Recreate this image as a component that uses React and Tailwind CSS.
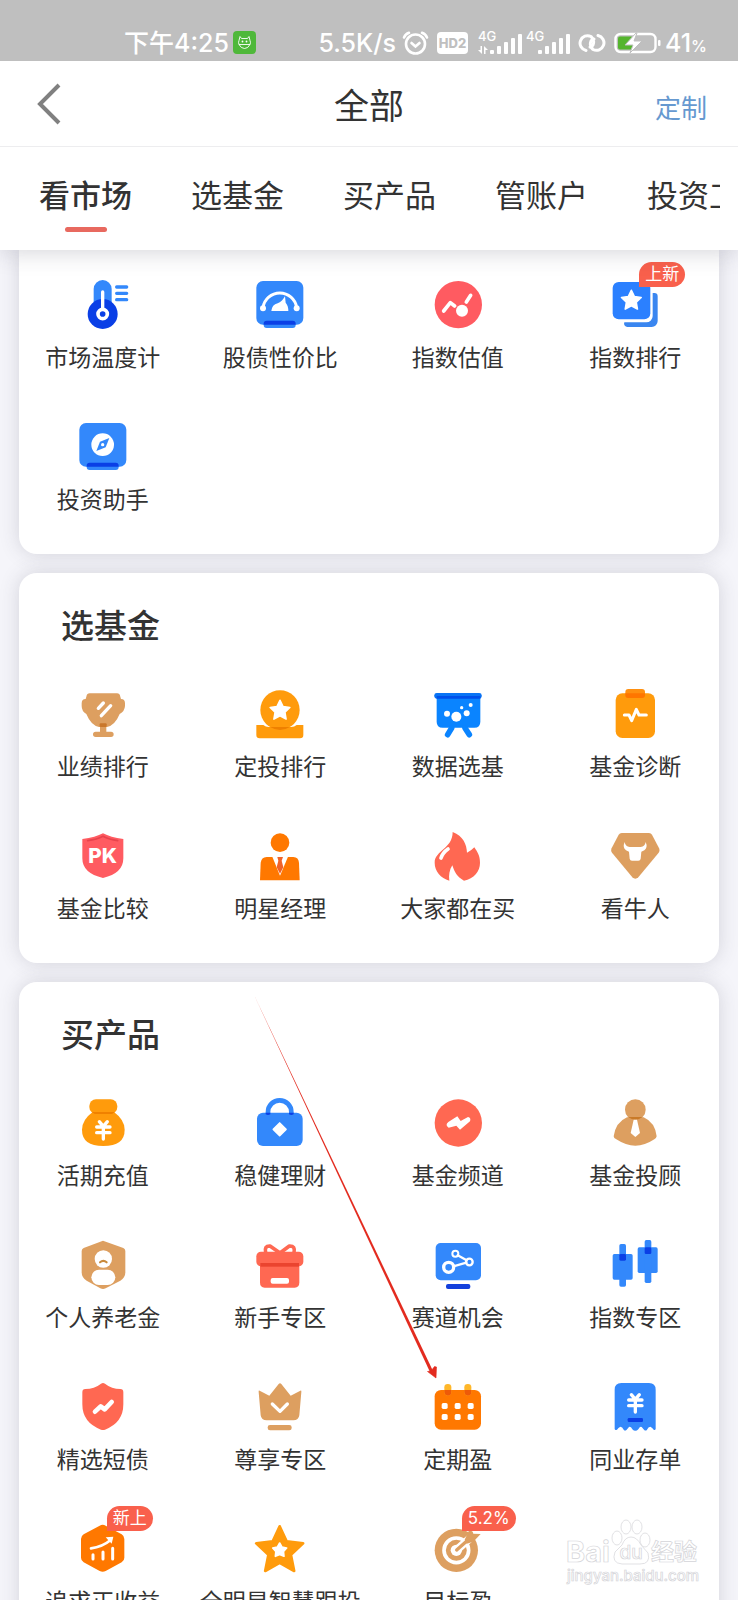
/**
 * All services page
 *
 * Status bar, page header with tabs, and cards that list the fund services.
 */

// ============================================================================
// Drawing helpers
// ============================================================================

const BLUE = '#3388fb';
const NAVY = '#0a3fe6';
const CORAL = '#ff6852';
const ROSE = '#ff5b61';
const AMBER = '#ff9b0c';
const ORANGE = '#ff7800';
const TAN = '#dd9f60';

const starPoints = (cx, cy, outer, inner) =>
  Array.from({ length: 10 }, (_, i) => {
    const r = i % 2 ? inner : outer;
    const a = (Math.PI / 5) * i - Math.PI / 2;
    return `${(cx + r * Math.cos(a)).toFixed(1)},${(cy + r * Math.sin(a)).toFixed(1)}`;
  }).join(' ');

const Star = ({ cx, cy, r, ratio = 0.5, fill, join = 5 }) => (
  <polygon
    points={starPoints(cx, cy, r, r * ratio)}
    fill={fill}
    stroke={fill}
    strokeWidth={join}
    strokeLinejoin="round"
  />
);

const Line = ({ d, w = 9, color = '#fff' }) => (
  <path d={d} fill="none" stroke={color} strokeWidth={w} strokeLinecap="round" strokeLinejoin="round" />
);

const Tile = () => (
  <>
    <rect x="7" y="6" width="141" height="131" rx="20" fill={BLUE} />
    <rect x="29" y="125" width="96" height="22" rx="9" fill={BLUE} />
    <path d="M38 125h78q9 0 9 9v3H29v-3q0-9 9-9z" fill={NAVY} />
  </>
);

const Yen = ({ y = 0 }) => (
  <g transform={`translate(0 ${y})`}>
    <Line d="M67 74l12 14l12-14M79 88v38M59 90h40M59 107h40" w={10} />
  </g>
);

// ============================================================================
// Service icons, all on a 156 x 156 grid
// ============================================================================

const ICONS = {
  thermometer: (
    <>
      <rect x="50" y="3" width="54" height="100" rx="27" fill={BLUE} />
      <circle cx="77" cy="105" r="45" fill={NAVY} />
      <Line d="M77 39v48" w={10} />
      <circle cx="77" cy="105" r="14" fill="none" stroke="#fff" strokeWidth="11" />
      <Line d="M119 24h30M119 43h30M119 62h30" color={BLUE} w={10} />
    </>
  ),
  gauge: (
    <>
      <Tile />
      <Line d="M27 86a51 51 0 0 1 101 0" />
      <circle cx="27" cy="88" r="9" fill="#fff" />
      <circle cx="128" cy="88" r="9" fill="#fff" />
      <path d="M52 96Q54 77 71 73Q84 68 93 52L95 71Q103 80 103 96Z" fill="#fff" />
    </>
  ),
  valuation: (
    <>
      <circle cx="79" cy="77" r="71" fill={ROSE} />
      <Line d="M35 96L55 71L68 81" w={11} />
      <Line d="M103 69L116 49" w={11} />
      <circle cx="90" cy="95" r="18" fill="#fff" />
    </>
  ),
  ranking: (
    <>
      <rect x="11" y="9" width="113" height="112" rx="18" fill="#2b80ff" />
      <path d="M131 42h5a10 10 0 0 1 10 10v74a18 18 0 0 1-18 18H56a10 10 0 0 1-10-14h66a19 19 0 0 0 19-19z" fill="#3a86f0" />
      <Star cx={67} cy={65} r={31} fill="#fff" />
    </>
  ),
  compass: (
    <>
      <Tile />
      <circle cx="77" cy="71" r="34" fill="#fff" />
      <path d="M97 51L86 79L58 90L69 62Z" fill={BLUE} />
      <circle cx="77" cy="71" r="5" fill="#fff" />
    </>
  ),
  trophy: (
    <>
      <path
        d="M38 16H120Q128 16 130 26L132 33Q144 33 144 46V54Q143 70 128 78Q114 112 90 117H66Q42 112 28 78Q14 70 14 54V46Q14 33 26 33L28 26Q30 16 38 16Z"
        fill={TAN}
      />
      <path d="M69 106h19v25h14q8 0 8 8t-8 8H56q-8 0-8-8t8-8h13z" fill={TAN} />
      <rect x="68" y="106" width="21" height="11" rx="3" fill="#c9772b" />
      <Line d="M64 61L79 45M73 83L101 53" w={10} />
    </>
  ),
  medal: (
    <>
      <circle cx="78" cy="66" r="59" fill={AMBER} />
      <path d="M7 111H28Q35 117 44 117H112Q121 117 128 111H148V141Q148 151 138 151H17Q7 151 7 141Z" fill={AMBER} />
      <path d="M48 117A59 59 0 0 0 108 117Z" fill="#ee8000" />
      <Star cx={78} cy={68} r={31} fill="#fff" />
    </>
  ),
  board: (
    <>
      <path d="M14 22H145V101Q145 119 127 119H32Q14 119 14 101Z" fill="#0a84ff" />
      <rect x="7" y="15" width="142" height="17" rx="7" fill="#0a74f5" />
      <rect x="14" y="24" width="131" height="8" fill="#0050ea" />
      <Line d="M59 120L47 140M99 120L112 140" w={17} color="#0a84ff" />
      <circle cx="45" cy="77" r="9" fill="#fff" />
      <circle cx="73" cy="86" r="15" fill="#fff" />
      <circle cx="104" cy="76" r="9" fill="#fff" />
      <circle cx="89" cy="59" r="5" fill="#fff" />
      <circle cx="116" cy="51" r="6" fill="#fff" />
    </>
  ),
  diagnosis: (
    <>
      <rect x="20" y="16" width="118" height="134" rx="20" fill={AMBER} />
      <rect x="49" y="3" width="59" height="27" rx="9" fill="#ff9010" />
      <path d="M49 16h59v5q0 9-9 9H58q-9 0-9-9z" fill="#ff7600" />
      <Line d="M46 81H60L68 98L82 64L90 81H112" />
    </>
  ),
  pk: (
    <>
      <path d="M78 10Q100 22 139 27V85Q139 130 78 144Q16 130 16 85V27Q56 22 78 10Z" fill={ROSE} />
      <Line d="M32 32Q60 29 78 19Q96 29 122 32" w={5} color="#e8434c" />
      <text x="77" y="98" textAnchor="middle" fontSize="62" fontWeight="800" fill="#fff">PK</text>
    </>
  ),
  manager: (
    <>
      <circle cx="78" cy="38" r="28" fill={ORANGE} />
      <path d="M38 81H118Q134 81 135 99L137 151H18L20 99Q22 81 38 81Z" fill={ORANGE} />
      <path d="M55 80H102L78 137Z" fill="#fff" />
      <path d="M70 81H87L83 92L88 112L78 131L68 112L73 92Z" fill="#f0632a" />
    </>
  ),
  fire: (
    <>
      <path
        d="M62 6C94 18 104 44 105 68Q118 62 127 52C136 66 144 76 144 98C144 124 126 146 96 152C74 140 68 126 61 106C52 120 50 136 52 152C26 144 8 124 8 98C8 62 62 56 62 6Z"
        fill={CORAL}
      />
      <Line d="M48 57Q32 68 27 84" w={11} />
    </>
  ),
  bull: (
    <>
      <path
        d="M38 9H120Q126 9 129 14L151 56Q153 62 149 68L88 142Q79 150 70 142L9 68Q5 62 7 56L29 14Q32 9 38 9Z"
        fill={TAN}
      />
      <path
        d="M47 36Q49 49 62 51H95Q108 49 110 36Q117 52 106 61L97 65L95 86Q94 92 88 92H69Q63 92 62 86L60 65L51 61Q40 52 47 36Z"
        fill="#fff"
      />
    </>
  ),
  moneybag: (
    <>
      <rect x="37" y="7" width="84" height="43" rx="20" fill={AMBER} />
      <path d="M48 44H110Q143 68 143 98Q143 147 79 147T15 98Q15 68 48 44Z" fill={AMBER} />
      <path d="M44 45H114L105 51H53Z" fill="#f08100" />
      <Yen />
    </>
  ),
  lock: (
    <>
      <path d="M42 54V45A35 35 0 0 1 112 45V54" fill="none" stroke={BLUE} strokeWidth="14" />
      <rect x="9" y="47" width="137" height="100" rx="18" fill={BLUE} />
      <path d="M35 47h14v5q-7 4-14 0zM105 47h14v5q-7 4-14 0z" fill={NAVY} />
      <path d="M77 78L96 97L77 116L58 97Z" fill="#fff" stroke="#fff" strokeWidth="5" strokeLinejoin="round" />
    </>
  ),
  channel: (
    <>
      <circle cx="79" cy="78" r="71" fill={CORAL} />
      <path d="M49 75L76 58L86 72L108 60Q118 62 114 73L84 98L73 86L50 92Q38 84 49 75Z" fill="#fff" />
    </>
  ),
  advisor: (
    <>
      <path d="M54 61H104Q138 76 143 118Q142 124 136 127Q79 165 22 127Q14 124 14 118Q20 76 54 61Z" fill={TAN} />
      <circle cx="79" cy="38" r="31" fill={TAN} />
      <path d="M57 60H101Q79 76 57 60Z" fill="#c97a28" />
      <path d="M74 68H84L93 108L79 120L65 108Z" fill="#fff" />
    </>
  ),
  pension: (
    <>
      <path
        d="M78 5L139 27Q145 30 145 36V100Q145 116 130 125L86 148Q78 152 70 148L29 125Q14 116 14 100V36Q14 30 20 27Z"
        fill={TAN}
      />
      <circle cx="79" cy="60" r="26" fill="#fff" />
      <Line d="M69 70Q79 61 89 70" w={6} color="#c98a3c" />
      <rect x="43" y="92" width="72" height="46" rx="23" fill="#fff" />
    </>
  ),
  gift: (
    <>
      <Line d="M35 42Q30 20 48 21L78 42L106 21Q125 20 120 42" w={11} color={CORAL} />
      <rect x="7" y="38" width="141" height="44" rx="14" fill={CORAL} />
      <path d="M18 72H136V130Q136 146 122 146H32Q18 146 18 130Z" fill={CORAL} />
      <rect x="19" y="72" width="116" height="11" fill="#ea442f" />
      <rect x="50" y="117" width="55" height="17" rx="6" fill="#fff" />
    </>
  ),
  track: (
    <>
      <rect x="11" y="12" width="136" height="112" rx="15" fill={BLUE} />
      <rect x="42" y="135" width="73" height="15" rx="6" fill="#1340dc" />
      <Line d="M64 82L103 71M77 49L104 64" w={7} />
      <circle cx="50" cy="85" r="15" fill="none" stroke="#fff" strokeWidth="10" />
      <circle cx="112" cy="69" r="10" fill="none" stroke="#fff" strokeWidth="7" />
      <circle cx="70" cy="44" r="9" fill="none" stroke="#fff" strokeWidth="6" />
    </>
  ),
  candles: (
    <>
      <rect x="11" y="45" width="60" height="77" rx="5" fill={BLUE} />
      <rect x="31" y="15" width="20" height="128" rx="5" fill={BLUE} />
      <rect x="31" y="45" width="20" height="20" rx="4" fill={NAVY} />
      <rect x="86" y="25" width="60" height="77" rx="5" fill={BLUE} />
      <rect x="107" y="3" width="20" height="129" rx="5" fill={BLUE} />
      <rect x="107" y="25" width="20" height="20" rx="4" fill={NAVY} />
    </>
  ),
  bond: (
    <>
      <path
        d="M72 8Q78 4 84 8Q104 24 130 24Q139 24 139 34V70Q139 125 84 146Q78 148 72 146Q16 125 16 70V34Q16 24 25 24Q52 24 72 8Z"
        fill={CORAL}
      />
      <Line d="M54 92L71 76L83 85L104 63" w={14} />
    </>
  ),
  crown: (
    <>
      <path
        d="M17 29L46 44L74 9Q78 4 82 9L110 44L139 29Q143 28 142 33L136 103Q134 118 118 118H38Q22 118 20 103L14 33Q13 28 17 29Z"
        fill={TAN}
      />
      <rect x="41" y="132" width="72" height="16" rx="7" fill={TAN} />
      <Line d="M55 69L78 91L100 69" w={10} />
    </>
  ),
  calendar: (
    <>
      <rect x="8" y="27" width="139" height="119" rx="19" fill={ORANGE} />
      <rect x="37" y="9" width="21" height="35" rx="10" fill="#ffb72a" />
      <rect x="97" y="9" width="21" height="35" rx="10" fill="#ffb72a" />
      <path d="M37 27h21v7q0 10-10 10t-11-10zM97 27h21v7q0 10-10 10t-11-10z" fill="#ee5a08" />
      {[38, 77, 116].map((x) =>
        [75, 108].map((y) => <rect key={`${x}-${y}`} x={x - 9} y={y - 9} width="18" height="18" rx="5" fill="#fff" />)
      )}
    </>
  ),
  deposit: (
    <>
      <path
        d="M37 6H120Q140 6 140 26V144Q138 149 134 146Q130 140 124 137Q118 137 114 146Q110 151 105 146L98 138Q92 135 88 145Q79 154 70 145Q66 135 60 138L53 146Q48 151 44 146Q40 137 34 137Q28 140 24 146Q18 149 17 144V26Q17 6 37 6Z"
        fill={BLUE}
      />
      <Yen y={-33} />
      <rect x="56" y="111" width="46" height="12" rx="4" fill={NAVY} />
    </>
  ),
  growth: (
    <>
      <path
        d="M68 8Q77 3 86 8L134 34Q142 39 142 48V104Q142 113 134 118L86 144Q77 149 68 144L20 118Q12 113 12 104V48Q12 39 20 34Z"
        fill={ORANGE}
      />
      <Line d="M42 76Q76 72 100 52" w={8} />
      <path d="M86 43L109 41L104 62Z" fill="#fff" />
      <Line d="M48 95V108M78 87V108M107 76V108" w={9} />
    </>
  ),
  star: (
    <>
      <Star cx={77} cy={84} r={74} ratio={0.48} fill={AMBER} join={8} />
      <Star cx={77} cy={82} r={22} ratio={0.55} fill="#fff" />
    </>
  ),
  target: (
    <>
      <circle cx="73" cy="82" r="65" fill={TAN} />
      <circle cx="73" cy="82" r="37" fill="none" stroke="#fff" strokeWidth="11" />
      <circle cx="73" cy="82" r="17" fill="#fff" />
      <Line d="M74 81L118 42" w={24} />
      <Line d="M74 81L118 42" w={10} color={TAN} />
      <path d="M98 50L112 20L122 26L124 32L146 33L124 56L104 62Z" fill={TAN} />
    </>
  ),
};

// ============================================================================
// Page data
// ============================================================================

const TABS = ['看市场', '选基金', '买产品', '管账户', '投资工具'];

const MARKET = [
  { icon: 'thermometer', label: '市场温度计' },
  { icon: 'gauge', label: '股债性价比' },
  { icon: 'valuation', label: '指数估值' },
  { icon: 'ranking', label: '指数排行', badge: '上新' },
  { icon: 'compass', label: '投资助手' },
];

const FUNDS = [
  { icon: 'trophy', label: '业绩排行' },
  { icon: 'medal', label: '定投排行' },
  { icon: 'board', label: '数据选基' },
  { icon: 'diagnosis', label: '基金诊断' },
  { icon: 'pk', label: '基金比较' },
  { icon: 'manager', label: '明星经理' },
  { icon: 'fire', label: '大家都在买' },
  { icon: 'bull', label: '看牛人' },
];

const PRODUCTS = [
  { icon: 'moneybag', label: '活期充值' },
  { icon: 'lock', label: '稳健理财' },
  { icon: 'channel', label: '基金频道' },
  { icon: 'advisor', label: '基金投顾' },
  { icon: 'pension', label: '个人养老金' },
  { icon: 'gift', label: '新手专区' },
  { icon: 'track', label: '赛道机会' },
  { icon: 'candles', label: '指数专区' },
  { icon: 'bond', label: '精选短债' },
  { icon: 'crown', label: '尊享专区' },
  { icon: 'calendar', label: '定期盈' },
  { icon: 'deposit', label: '同业存单' },
  { icon: 'growth', label: '追求正收益', badge: '新上' },
  { icon: 'star', label: '全明星智慧跟投' },
  { icon: 'target', label: '目标盈', badge: '5.2%' },
];

// ============================================================================
// Status bar
// ============================================================================

const Signal = ({ data }) => (
  <svg className="h-6 w-[44px] overflow-visible" viewBox="0 0 44 24" fill="#fff">
    <text x="0" y="10" fontSize="13" fontWeight="500">4G</text>
    {data && <path d="M4 15v8L0 19h2.500v-4zM6 23v-8l4 4H7.500v4z" />}
    <rect x="12" y="19" width="4" height="4" rx="1" />
    <rect x="19" y="15" width="4" height="8" rx="1" />
    <rect x="26" y="11" width="4" height="12" rx="1" />
    <rect x="33" y="7" width="4" height="16" rx="1" />
    <rect x="40" y="3" width="4" height="20" rx="1" />
  </svg>
);

const StatusBar = () => (
  <div className="flex h-[61px] items-center bg-[#bfbfbf] pt-6 pr-[31px] pl-[124px] text-[25px] leading-8 font-medium text-white">
    <span>下午4:25</span>
    <svg className="ml-1 size-[23px]" viewBox="0 0 23 23">
      <rect width="23" height="23" rx="4" fill="#4fb83a" />
      <path
        d="M7 5.500l1.500 2h6l1.500-2l1 4q1 2 0 4q-2 4-5.500 4t-5.500-4q-1-2 0-4zM6 13.500h11"
        fill="none"
        stroke="#fff"
        strokeWidth=".9"
        strokeLinejoin="round"
      />
      <circle cx="9.500" cy="10.500" r=".9" fill="#fff" />
      <circle cx="13.500" cy="10.500" r=".9" fill="#fff" />
    </svg>
    <span className="ml-auto">5.5K/s</span>
    <svg className="ml-1.5 h-6 w-[27px]" viewBox="0 0 27 24" fill="none" stroke="#fff" strokeWidth="2.600" strokeLinecap="round">
      <circle cx="13.500" cy="13" r="9.500" />
      <path d="M9.500 12l4 3.500l4-3.500M2 6.500Q3.500 3 7 1.800M25 6.500Q23.500 3 20 1.800" />
    </svg>
    <svg className="ml-2 h-[22px] w-[31px]" viewBox="0 0 31 22">
      <rect width="31" height="22" rx="4" fill="#fff" />
      <text x="15.500" y="16" textAnchor="middle" fontSize="13" fontWeight="800" fill="#bfbfbf">HD2</text>
    </svg>
    <span className="ml-2.5 flex gap-1">
      <Signal data />
      <Signal />
    </span>
    <svg className="ml-2 h-5 w-7" viewBox="0 0 28 20" fill="none" stroke="#fff" strokeWidth="3" strokeLinecap="round">
      <path d="M8 17.500A7.500 7.500 0 1 1 13 3.500Q17 7 15 12Q14 14 12 14" />
      <path d="M20 2.500A7.500 7.500 0 1 1 15 16.500Q11 13 13 8Q14 6 16 6" />
    </svg>
    <svg className="ml-2 h-[22px] w-[47px]" viewBox="0 0 47 22">
      <rect x="1.500" y="2" width="40" height="18" rx="5" fill="none" stroke="#fff" strokeWidth="2.400" />
      <rect x="4" y="4.500" width="15" height="13" rx="2" fill="#55b52e" />
      <path d="M22 1L11 13h8l-3 8L28 9h-8l3-8z" fill="#fff" stroke="#bfbfbf" />
      <rect x="44" y="8" width="2.500" height="6" rx="1" fill="#fff" />
    </svg>
    <span className="ml-1">
      41<span className="text-base">%</span>
    </span>
  </div>
);

// ============================================================================
// Header with tabs
// ============================================================================

const Header = () => (
  <header className="relative z-10 bg-white shadow-[0_2px_22px_rgba(60,60,80,0.22)]">
    <StatusBar />
    <div className="grid h-[86px] grid-cols-3 items-center border-b border-[#ededef] px-[31px]">
      <button type="button" aria-label="返回" className="justify-self-start pl-1.5">
        <svg className="h-[42px] w-6" viewBox="0 0 24 42" fill="none" stroke="#808080" strokeWidth="4">
          <path d="M22 2L3 21L22 40" />
        </svg>
      </button>
      <h1 className="pt-1 text-center text-[35px] leading-10 text-[#333]">全部</h1>
      <button type="button" className="justify-self-end pt-2.5 text-[26px] leading-10 text-[#6699d0]">
        定制
      </button>
    </div>
    <nav className="mr-[18px] flex h-[103px] gap-[59px] overflow-hidden pt-7 pl-[39px]">
      {TABS.map((tab, i) => (
        <button
          key={tab}
          type="button"
          className={`flex shrink-0 flex-col items-center gap-2.5 self-start text-[31px] leading-[42px] text-[#333] ${i === 0 ? 'font-medium' : ''}`}
        >
          {tab}
          {i === 0 && <span className="h-[5px] w-[42px] rounded-full bg-[#e8695f]" />}
        </button>
      ))}
    </nav>
  </header>
);

// ============================================================================
// Cards
// ============================================================================

const Service = ({ icon, label, badge }) => (
  <a href="#" className="relative flex flex-col items-center gap-[11px] text-[23px] leading-8 whitespace-nowrap text-[#333]">
    <svg className="size-[52px]" viewBox="0 0 156 156" aria-hidden="true">
      {ICONS[icon]}
    </svg>
    {label}
    {badge && (
      <span className="absolute -top-[17px] left-[calc(50%+4px)] rounded-full rounded-bl-none bg-[#f9604c] px-1.5 text-[17px] leading-[25px] text-white">
        {badge}
      </span>
    )}
  </a>
);

const Card = ({ title, items, children }) => (
  <section
    className={`relative bg-white pt-[29px] pb-[38px] shadow-[0_0_20px_rgba(60,60,80,0.18)] ${title ? 'rounded-[18px]' : 'rounded-b-[18px]'}`}
  >
    {title && <h2 className="mb-[38px] pl-[42px] text-[33px] leading-[48px] font-medium text-[#333]">{title}</h2>}
    <div className="-mx-[5px] grid grid-cols-4 gap-y-[47px]">
      {items.map((item) => (
        <Service key={item.label} {...item} />
      ))}
    </div>
    {children}
  </section>
);

const Arrow = () => (
  <svg className="pointer-events-none absolute top-2.5 left-[234px] h-[388px] w-[184px]" viewBox="0 0 184 388" fill="#e32b1f">
    <path d="M1 3L180 379L177 380Z" />
    <path d="M183 386L174.500 379.500L178 379L181.500 374.500L183.500 375Z" stroke="#e32b1f" strokeWidth=".6" strokeLinejoin="round" />
  </svg>
);

const Watermark = () => (
  <svg
    className="pointer-events-none absolute right-[38px] bottom-3 h-[70px] w-[136px]"
    viewBox="0 0 136 70"
    fill="#fff"
    stroke="#d4d4d8"
    strokeWidth=".7"
  >
    <text x="2" y="44" fontSize="29" fontWeight="700">Bai</text>
    <ellipse cx="53" cy="20" rx="5" ry="7" />
    <ellipse cx="62" cy="9" rx="5" ry="7" />
    <ellipse cx="73" cy="9" rx="5" ry="7" />
    <ellipse cx="81" cy="22" rx="5" ry="7" />
    <path d="M67 19Q73 19 77 27L84 35Q87 46 76 46H58Q47 45 51 34L58 27Q61 19 67 19Z" />
    <text x="67" y="41" textAnchor="middle" fontSize="19" fontWeight="500">du</text>
    <text x="87" y="42" fontSize="23" fontWeight="700">经验</text>
    <text x="3" y="63" fontSize="15" fontWeight="500">jingyan.baidu.com</text>
  </svg>
);

// ============================================================================
// App
// ============================================================================

export default function App() {
  return (
    <div className="relative flex h-screen flex-col overflow-hidden bg-[#f5f5fa] font-[Inter,'Noto_Sans_CJK_SC',sans-serif]">
      <Header />
      <main className="flex min-h-0 flex-1 flex-col gap-[19px] overflow-hidden px-[19px] *:shrink-0">
        <Card items={MARKET} />
        <Card title="选基金" items={FUNDS} />
        <Card title="买产品" items={PRODUCTS}>
          <Arrow />
        </Card>
      </main>
      <Watermark />
    </div>
  );
}
